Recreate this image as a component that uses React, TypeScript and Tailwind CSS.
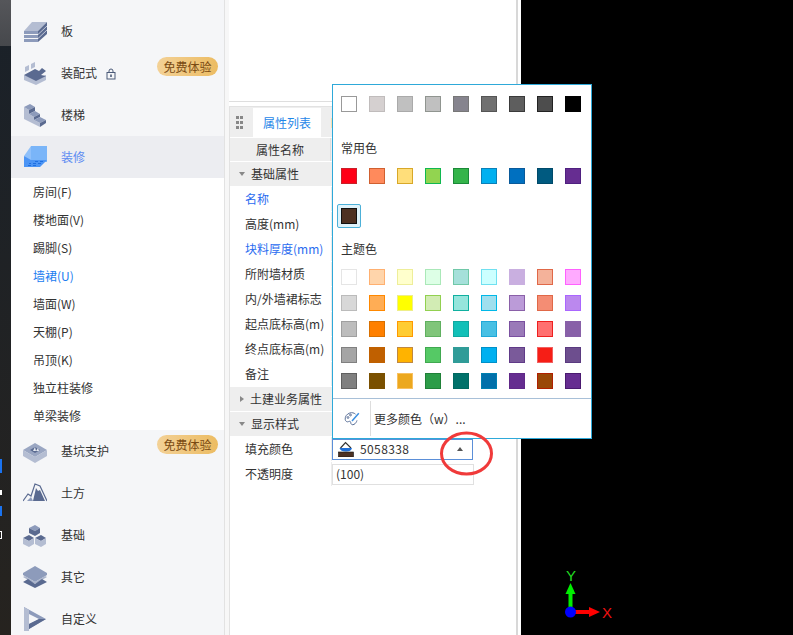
import { ReactNode } from "react";

const L = "#b4bdd2";
const M = "#8d9bbb";
const D = "#5a6a90";

function Icon({ children }: { children: ReactNode }) {
    return (
        <svg width="24" height="24" viewBox="0 0 24 24" className="shrink-0">
            {children}
        </svg>
    );
}

const SlabIcon = () => (
    <Icon>
        <polygon points="1,12 9,3 24,3 15,12" fill={L} />
        <rect x="1" y="12" width="14" height="3" fill={M} />
        <rect x="1" y="16" width="14" height="3" fill={M} />
        <rect x="1" y="20" width="14" height="3" fill={M} />
        <polygon points="15,12 24,3 24,15 15,23" fill={D} />
        <path d="M15 15.5 24 7M15 19.5 24 11" stroke="#dfe3ec" strokeWidth="0.8" />
    </Icon>
);

const PrefabIcon = () => (
    <Icon>
        <polygon points="2,6 6,4 6,9 2,11" fill={L} />
        <polygon points="8,3 12,1 12,6 8,8" fill={L} />
        <polygon points="1,14 1,19 13,24 23,19 23,14 13,18" fill={L} />
        <polygon points="1,14 12,8 16,10 19,7 23,10 18,14 23,15 13,20" fill={D} />
    </Icon>
);

const StairIcon = () => (
    <Icon>
        <polygon points="1,4 6,7 6,11 11,14 11,17 17,20 17,24 1,16" fill={L} />
        <polygon points="1,4 7,1 12,4 6,7" fill={M} />
        <polygon points="6,7 12,4 12,8 6,11" fill={D} />
        <polygon points="6,11 12,8 17,11 11,14" fill={M} />
        <polygon points="11,14 17,11 17,14 11,17" fill={D} />
        <polygon points="11,17 17,14 23,17 17,20" fill={M} />
        <polygon points="17,20 23,17 23,20 17,24" fill={D} />
    </Icon>
);

const FinishIcon = () => (
    <Icon>
        <polygon points="8,1 24,1 24,17 8,17" fill="#7ab5f8" />
        <polygon points="1,11 8,1 8,17" fill="#8fc0fa" />
        <polygon points="1,11 8,15 24,15 17,22 1,22" fill="#4b94f5" />
        <path d="M6 18.5h2M10 18.5h3M15 18.5h3M12 16.5h3M17 16.5h3M5 20.5h3M10 20.5h3" stroke="#1f6fe0" strokeWidth="1.2" />
    </Icon>
);

const PitIcon = () => (
    <Icon>
        <polygon points="0,11 12,4 24,11 12,18" fill="#9aa6c2" />
        <polygon points="0,11 12,18 12,24 0,17" fill={L} />
        <polygon points="12,18 24,11 24,17 12,24" fill={L} />
        <polygon points="7,11 12,8 17,11 12,14" fill={D} />
        <polygon points="10,12 12,8 13,12" fill="#e8ebf2" />
        <polygon points="13,12 15,9 16,12" fill="#e8ebf2" />
    </Icon>
);

const EarthIcon = () => (
    <Icon>
        <path d="M0 20 5 13 8 15 12 3 17 5 24 20" fill="none" stroke={D} strokeWidth="1.2" />
        <polygon points="4,20 8,16 10,20" fill={M} />
        <polygon points="10,20 13,7 15,10 17,9 22,20" fill={D} />
    </Icon>
);

const FoundationIcon = () => (
    <Icon>
        <polygon points="6,5 12,2 17,5 12,8" fill={M} />
        <polygon points="6,5 12,8 12,13 6,10" fill={D} />
        <polygon points="12,8 17,5 17,10 12,13" fill={D} />
        <polygon points="0,15 6,12 11,15 6,18" fill={D} />
        <polygon points="0,15 6,18 6,24 0,21" fill={L} />
        <polygon points="6,18 11,15 11,21 6,24" fill={L} />
        <polygon points="12,15 18,12 23,15 18,18" fill={D} />
        <polygon points="12,15 18,18 18,24 12,21" fill={L} />
        <polygon points="18,18 23,15 23,21 18,24" fill={L} />
    </Icon>
);

const OtherIcon = () => (
    <Icon>
        <polygon points="0,8 12,1 24,8 24,10 12,17 0,10" fill={M} />
        <polygon points="0,12 2,11 12,17 22,11 24,12 12,19" fill="#aab4cb" />
        <polygon points="0,17 5,14 12,19 19,14 24,17 12,23" fill={D} />
    </Icon>
);

const CustomIcon = () => (
    <Icon>
        <polygon points="1,0 23,12 6,22 6,17 16,12 6,7 6,24 1,24" fill={M} />
        <polygon points="1,0 6,3 6,24 1,24" fill={L} />
        <polygon points="6,17 16,12 23,12 6,22" fill={D} />
    </Icon>
);

const sideRowClass = "relative flex h-[42px] shrink-0 items-center pl-3 text-[#333]";

function SideRow({ icon, label, badge, lock }: { icon: ReactNode; label?: string; badge?: string; lock?: boolean }) {
    return (
        <div className={sideRowClass}>
            {icon}
            {label && <span className="ml-[14px]">{label}</span>}
            {lock && (
                <svg width="10" height="12" viewBox="0 0 10 12" className="ml-[9px] mt-[1px]">
                    <path d="M3 4.5V3a2 2 0 0 1 4 0v1.5" fill="none" stroke="#4b5a78" />
                    <rect x="1" y="4.5" width="8" height="6.5" fill="none" stroke="#4b5a78" />
                    <rect x="4.2" y="6.5" width="1.6" height="2.5" fill="#4b5a78" />
                </svg>
            )}
            {badge && (
                <span className="absolute right-[6px] top-[5px] flex h-[19px] w-[61px] items-center justify-center rounded-full bg-gradient-to-r from-[#f3d196] to-[#ecbc62] text-[12px] text-[#7a4a12]">
                    {badge}
                </span>
            )}
        </div>
    );
}

const subItems = ["房间(F)", "楼地面(V)", "踢脚(S)", "墙裙(U)", "墙面(W)", "天棚(P)", "吊顶(K)", "独立柱装修", "单梁装修"];

function Sidebar() {
    return (
        <div className="flex h-full w-[213px] shrink-0 flex-col overflow-hidden bg-[#f5f6f8] text-[12px]">
            <div className="-mt-[32px] flex flex-col">
                <SideRow icon={<SlabIcon />} />
                <SideRow icon={<SlabIcon />} label="板" />
                <SideRow icon={<PrefabIcon />} label="装配式" lock badge="免费体验" />
                <SideRow icon={<StairIcon />} label="楼梯" />
                <div className="bg-[#ecedf1]">
                    <div className={sideRowClass + " !text-[#5c8bf2]"}>
                        <FinishIcon />
                        <span className="ml-[14px]">装修</span>
                    </div>
                </div>
                <div className="bg-white">
                    {subItems.map((item) => (
                        <div
                            key={item}
                            className={"flex h-[28px] items-center pl-[22px] " + (item === "墙裙(U)" ? "text-[#1a7cf0]" : "text-[#333]")}
                        >
                            {item}
                        </div>
                    ))}
                </div>
                <SideRow icon={<PitIcon />} label="基坑支护" badge="免费体验" />
                <SideRow icon={<EarthIcon />} label="土方" />
                <SideRow icon={<FoundationIcon />} label="基础" />
                <SideRow icon={<OtherIcon />} label="其它" />
                <SideRow icon={<CustomIcon />} label="自定义" />
            </div>
        </div>
    );
}

function GroupRow({ label, open }: { label: string; open?: boolean }) {
    return (
        <div className="mb-px flex h-[24px] items-center bg-[#eeeeee] pl-[9px] text-[#333]">
            {open ? (
                <span className="mr-[6px] h-0 w-0 border-x-[3px] border-t-[4px] border-x-transparent border-t-[#888]" />
            ) : (
                <span className="mr-[6px] ml-px h-0 w-0 border-y-[3px] border-l-[4px] border-y-transparent border-l-[#888]" />
            )}
            {label}
        </div>
    );
}

function PropRow({ label, blue, children }: { label: string; blue?: boolean; children?: ReactNode }) {
    return (
        <div className="mb-px flex h-[24px] items-center">
            <div className={"flex h-full w-[102px] shrink-0 items-center border-r border-[#ececec] pl-[15px] " + (blue ? "text-[#2a6cf0]" : "text-[#333]")}>
                {label}
            </div>
            {children}
        </div>
    );
}

function BucketIcon() {
    return (
        <svg width="16" height="16" viewBox="0 0 16 16" className="shrink-0">
            <path d="M2.5 7 7.5 1.5 13 7" fill="none" stroke="#333" strokeWidth="1.2" />
            <path d="M1.5 7h12.5c-.5 2.500-2.500 3.500-6 3.500S2 9.500 1.500 7Z" fill="#1f6fd8" />
            <rect x="0.500" y="11" width="15" height="5" fill="#4d3122" stroke="#111" strokeWidth="0.6" />
        </svg>
    );
}

function PropertyPanel() {
    return (
        <div className="flex h-full w-[287px] shrink-0 flex-col bg-white text-[12px]">
            <div className="h-[102px] shrink-0 border-b border-[#dedede]" />
            <div className="mt-[4px] flex flex-1 flex-col border-l border-t border-[#e2e2e2]">
                <div className="flex h-[30px] shrink-0 items-end bg-[#eeeeee]">
                    <div className="grid h-[29px] w-[23px] grid-cols-2 content-center gap-x-[1px] gap-y-[2px] pl-[6px] pr-[10px]">
                        {[0, 1, 2, 3, 4, 5].map((i) => (
                            <span key={i} className="h-[3px] w-[3px] bg-[#888]" />
                        ))}
                    </div>
                    <div className="flex h-[29px] w-[68px] items-center justify-center bg-white text-[#1f87e8]">属性列表</div>
                    <span className="mb-[9px] ml-[10px] h-[10px] w-px bg-[#f7dfb0]" />
                </div>
                <div className="mt-px flex h-[23px] shrink-0 items-center bg-[#eeeeee] text-[#333]">
                    <div className="flex h-full w-[101px] items-center justify-center border-r border-[#ddd]">属性名称</div>
                </div>
                <div className="mt-px flex flex-col">
                    <GroupRow label="基础属性" open />
                    <PropRow label="名称" blue />
                    <PropRow label="高度(mm)" />
                    <PropRow label="块料厚度(mm)" blue />
                    <PropRow label="所附墙材质" />
                    <PropRow label="内/外墙裙标志" />
                    <PropRow label="起点底标高(m)" />
                    <PropRow label="终点底标高(m)" />
                    <PropRow label="备注" />
                    <GroupRow label="土建业务属性" />
                    <GroupRow label="显示样式" open />
                    <PropRow label="填充颜色">
                        <div className="flex h-[21px] w-[141px] items-center border border-[#5b8fd8] pl-[5px] pr-[9px] text-[#333]">
                            <BucketIcon />
                            <span className="ml-[6px] flex-1 text-[12px] tracking-[0.4px]">5058338</span>
                            <span className="h-0 w-0 border-x-[3px] border-b-[4px] border-x-transparent border-b-[#555]" />
                        </div>
                    </PropRow>
                    <PropRow label="不透明度">
                        <div className="flex h-[21px] w-[142px] items-center border border-[#e0e0e0] pl-[3px] text-[#333]">(100)</div>
                    </PropRow>
                </div>
            </div>
        </div>
    );
}

type Swatch = [string, string];

const grayRow: Swatch[] = [
    ["#ffffff", "#999999"], ["#d5d0d0", "#c0bcbc"], ["#c0c0c0", "#aaaaaa"], ["#c0c0c0", "#909590"], ["#86848e", "#777777"],
    ["#707070", "#555555"], ["#5e5e5e", "#3a3a3a"], ["#4d4d4d", "#222222"], ["#000000", "#000000"],
];
const commonRow: Swatch[] = [
    ["#ff0016", "#c8202a"], ["#ff8a5c", "#d06030"], ["#ffde7a", "#d8a828"], ["#92d450", "#10b850"], ["#34b44a", "#1a8a38"],
    ["#00b0f0", "#0a80b8"], ["#0070c0", "#0a5a9a"], ["#005a80", "#004a6a"], ["#662d91", "#4f2080"],
];
const themeRows: Swatch[][] = [
    [["#ffffff", "#e5e5e5"], ["#ffd5ab", "#ffb070"], ["#ffffcc", "#eeee99"], ["#ddffe6", "#aae8b8"], ["#a5e0da", "#70c8a8"], ["#ccffff", "#70e0f0"], ["#c9afe0", "#c9afe0"], ["#f4b29a", "#e06848"], ["#ffaaff", "#ff60ff"]],
    [["#d8d8d8", "#bbbbbb"], ["#ffad55", "#ff8800"], ["#ffff00", "#eeee88"], ["#d2ecb4", "#92d050"], ["#95e5dc", "#10b0a0"], ["#9fdfee", "#00b8e8"], ["#bb9bd8", "#8a60a8"], ["#f48d74", "#e06848"], ["#bb88ee", "#aa66ff"]],
    [["#bdbdbd", "#a0a0a0"], ["#ff8000", "#d87000"], ["#ffcc33", "#ff9900"], ["#80c57a", "#60b060"], ["#12c0b8", "#10a8a0"], ["#48c0e4", "#20a8d8"], ["#9a7ab8", "#7a50a0"], ["#ff7070", "#ee2020"], ["#8860a8", "#8860a8"]],
    [["#a5a5a5", "#808080"], ["#c06000", "#c06000"], ["#ffb300", "#c08840"], ["#55c965", "#40a850"], ["#309c98", "#309c98"], ["#00b0f0", "#0090c8"], ["#7a5a9a", "#603a88"], ["#f61e16", "#f06060"], ["#6d4e8e", "#5a3a80"]],
    [["#808080", "#606060"], ["#7a5000", "#7a5000"], ["#eca81e", "#f8c060"], ["#2c9c48", "#208038"], ["#00716a", "#006860"], ["#0070aa", "#0080b0"], ["#652d90", "#602888"], ["#9a4808", "#b02000"], ["#662d91", "#4a1a70"]],
];

function SwatchRow({ colors }: { colors: Swatch[] }) {
    return (
        <div className="flex gap-[12px]">
            {colors.map(([fill, border], i) => (
                <span key={i} className="h-[16px] w-[16px] border" style={{ backgroundColor: fill, borderColor: border }} />
            ))}
        </div>
    );
}

function ColorPopup() {
    return (
        <div className="absolute left-[332px] top-[84px] flex h-[355px] w-[260px] flex-col border border-[#2ea9d9] bg-white text-[12px] text-[#333]">
            <div className="flex flex-col pl-[8px] pt-[11px]">
                <SwatchRow colors={grayRow} />
                <div className="mt-[28px] h-[16px] leading-[16px]">常用色</div>
                <div className="mt-[12px]">
                    <SwatchRow colors={commonRow} />
                </div>
                <div className="-ml-[4px] mt-[20px] flex h-[24px] w-[24px] items-center justify-center rounded-[2px] border border-[#4cb0d8] bg-[#dff3fb]">
                    <span className="h-[16px] w-[16px] border border-[#111] bg-[#4d3122]" />
                </div>
                <div className="mt-[13px] h-[16px] leading-[16px]">主题色</div>
                <div className="mt-[12px] flex flex-col gap-[10px]">
                    {themeRows.map((row, i) => (
                        <SwatchRow key={i} colors={row} />
                    ))}
                </div>
            </div>
            <div className="mt-[9px] flex flex-1 items-center border-t border-[#a8c0d8] py-[2px]">
                <div className="flex h-full w-[38px] items-center justify-center border-r border-[#dddddd]">
                    <svg width="16" height="16" viewBox="0 0 16 16" fill="none" stroke="#5a7098" strokeWidth="1">
                        <path d="M11.500 3.200C10 1.800 8 1.300 5.800 2 2.700 3 1 5.600 1.200 8.300c.2 2.200 2 3 3.300 2.300 1.300-.7 2.400-.2 2.300 1.200-.1 1.500 1.500 2.500 3.200 1.600 1.400-.7 2.500-2.300 3-4" />
                        <path d="M8 10 14.800 2.300" stroke="#3a8ee0" strokeWidth="1.500" />
                        <circle cx="4" cy="6.500" r="0.900" />
                        <circle cx="6.500" cy="4" r="0.900" />
                    </svg>
                </div>
                <span className="ml-[3px] mt-px">更多颜色（w）...</span>
            </div>
        </div>
    );
}

function Axis() {
    return (
        <>
            <svg width="60" height="40" viewBox="0 0 60 40" className="absolute left-[560px] top-[580px]">
                <rect x="8.500" y="12" width="4" height="20" fill="#00ee00" />
                <polygon points="10.500,3 15.500,14 5.500,14" fill="#00ee00" />
                <rect x="12" y="30" width="18" height="4" fill="#ff0000" />
                <polygon points="40,32 29,27 29,37" fill="#ff0000" />
                <circle cx="10.500" cy="32" r="5.500" fill="#0000ff" />
            </svg>
            <span className="absolute left-[566px] top-[568px] font-['Liberation_Sans',sans-serif] text-[15px] leading-[15px] text-[#22dd22]">Y</span>
            <span className="absolute left-[602px] top-[605px] font-['Liberation_Sans',sans-serif] text-[15px] leading-[15px] text-[#ee1111]">X</span>
        </>
    );
}

export default function App() {
    return (
        <div className="relative flex h-[635px] w-[793px] overflow-hidden bg-black font-['Noto_Sans_CJK_SC','Noto_Sans',sans-serif]">
            <div className="flex h-full w-[11px] shrink-0 flex-col bg-gradient-to-b from-[#1a2129] to-[#26231f]">
                <div className="h-[46px] bg-gradient-to-b from-[#55565a] to-[#46484c]" />
                <div className="mt-[413px] h-[14px] w-[2px] bg-[#1a73f0]" />
                <div className="mt-[17px] h-[5px] w-[2px] bg-white" />
                <div className="mt-[11px] h-[10px] w-[2px] bg-[#1a73f0]" />
                <div className="mt-[15px] h-[8px] w-[2px] border-r border-y border-white" />
            </div>
            <Sidebar />
            <div className="h-full w-[5px] shrink-0 border-l border-[#e2e2e2] bg-[#f7f7f7]" />
            <PropertyPanel />
            <div className="h-full w-[5px] shrink-0 border-l-2 border-[#d8d8d8] bg-white" />
            <ColorPopup />
            <svg width="60" height="50" viewBox="0 0 60 50" className="absolute left-[437px] top-[429px]">
                <ellipse cx="29.500" cy="24.500" rx="25" ry="20.500" fill="none" stroke="#f03a3a" strokeWidth="3" />
            </svg>
            <Axis />
        </div>
    );
}
